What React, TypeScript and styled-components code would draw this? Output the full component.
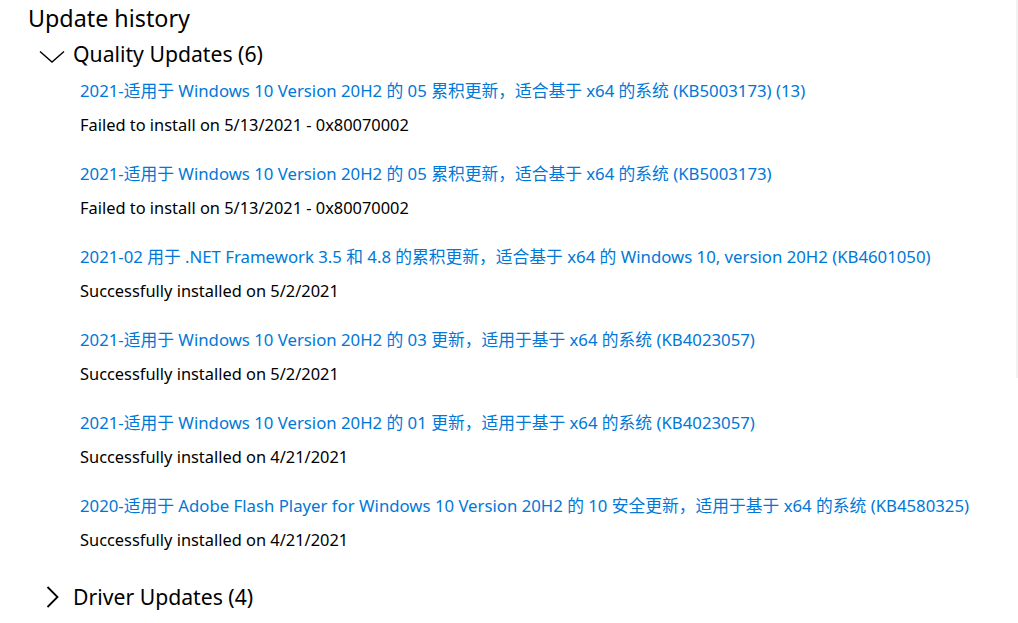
import { createGlobalStyle, styled } from "styled-components";

const GlobalStyle = createGlobalStyle`
  html, body {
    margin: 0;
    padding: 0;
    background: #ffffff;
  }
  body {
    font-family: "Segoe UI", "Noto Sans", "Noto Sans CJK SC", sans-serif;
    color: #000000;
    overflow: hidden;
  }
`;

const Page = styled.div`
  position: relative;
  width: 1018px;
  height: 623px;
  padding: 2px 0 0 28px;
  box-sizing: border-box;
`;

const Title = styled.h1`
  margin: 0;
  font-size: 23.3px;
  font-weight: 400;
  line-height: 32px;
`;

const Section = styled.section<{ $gap: number }>`
  margin-top: ${(p) => p.$gap}px;
`;

const Header = styled.div`
  display: flex;
  align-items: center;
  height: 36px;
  font-size: 21.2px;
  line-height: 36px;
`;

const IconBox = styled.span<{ $drop?: number }>`
  display: flex;
  align-items: center;
  justify-content: center;
  width: 45px;
  padding-left: 3px;
  padding-top: ${(p) => p.$drop ?? 0}px;
  box-sizing: border-box;
`;

const List = styled.div`
  display: flex;
  flex-direction: column;
  gap: 15px;
  padding: 2px 0 0 52px;
`;

const Item = styled.div`
  display: flex;
  flex-direction: column;
`;

const Name = styled.a`
  font-size: 16.75px;
  line-height: 34px;
  color: #0078d7;
  text-decoration: none;
  white-space: nowrap;
`;

const Status = styled.div`
  font-size: 16.4px;
  line-height: 34px;
  white-space: nowrap;
`;

const ScrollThumb = styled.div`
  position: absolute;
  top: 0;
  right: 0;
  width: 2px;
  height: 378px;
  background: #f2f2f2;
`;

const ChevronDown = () => (
  <svg width="26" height="13" viewBox="0 0 26 13" fill="none">
    <path d="M1 1.5 L13 12 L25 1.5" stroke="#000" strokeWidth="1.4" />
  </svg>
);

const ChevronRight = () => (
  <svg width="13" height="22" viewBox="0 0 13 22" fill="none">
    <path d="M1.5 1 L11.5 11 L1.5 21" stroke="#000" strokeWidth="1.8" />
  </svg>
);

const updates = [
  {
    name: "2021-适用于 Windows 10 Version 20H2 的 05 累积更新，适合基于 x64 的系统 (KB5003173) (13)",
    status: "Failed to install on 5/13/2021 - 0x80070002",
  },
  {
    name: "2021-适用于 Windows 10 Version 20H2 的 05 累积更新，适合基于 x64 的系统 (KB5003173)",
    status: "Failed to install on 5/13/2021 - 0x80070002",
  },
  {
    name: "2021-02 用于 .NET Framework 3.5 和 4.8 的累积更新，适合基于 x64 的 Windows 10, version 20H2 (KB4601050)",
    status: "Successfully installed on 5/2/2021",
  },
  {
    name: "2021-适用于 Windows 10 Version 20H2 的 03 更新，适用于基于 x64 的系统 (KB4023057)",
    status: "Successfully installed on 5/2/2021",
  },
  {
    name: "2021-适用于 Windows 10 Version 20H2 的 01 更新，适用于基于 x64 的系统 (KB4023057)",
    status: "Successfully installed on 4/21/2021",
  },
  {
    name: "2020-适用于 Adobe Flash Player for Windows 10 Version 20H2 的 10 安全更新，适用于基于 x64 的系统 (KB4580325)",
    status: "Successfully installed on 4/21/2021",
  },
];

export default function App() {
  return (
    <Page>
      <GlobalStyle />
      <Title>Update history</Title>
      <Section $gap={2}>
        <Header>
          <IconBox $drop={5}>
            <ChevronDown />
          </IconBox>
          Quality Updates (6)
        </Header>
        <List>
          {updates.map((u, i) => (
            <Item key={i}>
              <Name href="#">{u.name}</Name>
              <Status>{u.status}</Status>
            </Item>
          ))}
        </List>
      </Section>
      <Section $gap={22}>
        <Header>
          <IconBox>
            <ChevronRight />
          </IconBox>
          Driver Updates (4)
        </Header>
      </Section>
      <ScrollThumb />
    </Page>
  );
}
